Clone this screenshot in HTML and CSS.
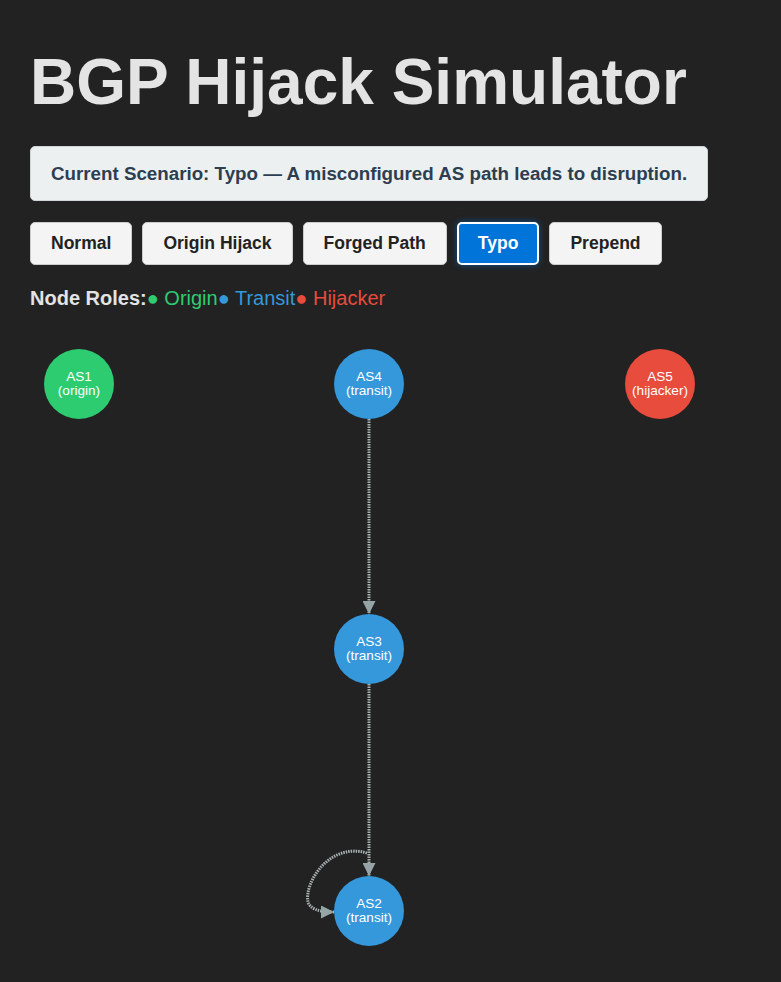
FILE: index.html
```html
<!DOCTYPE html>
<html lang="en">
<head>
<meta charset="utf-8">
<title>BGP Hijack Simulator</title>
<link rel="stylesheet" href="styles.css">
</head>
<body>
<main class="app">
  <h1 class="title">BGP Hijack Simulator</h1>
  <div class="scenario">Current Scenario: Typo — A misconfigured AS path leads to disruption.</div>
  <div class="controls">
    <button class="btn">Normal</button>
    <button class="btn">Origin Hijack</button>
    <button class="btn">Forged Path</button>
    <button class="btn active">Typo</button>
    <button class="btn">Prepend</button>
  </div>
  <div class="legend"><strong>Node Roles:</strong><span class="origin">● Origin</span><span class="transit">● Transit</span><span class="hijacker">● Hijacker</span></div>
  <svg class="graph" width="721" height="652" viewBox="0 0 721 652">
    <defs>
      <marker id="arrow" markerUnits="userSpaceOnUse" markerWidth="13" markerHeight="13" viewBox="0 0 12 12" refX="12" refY="6" orient="auto">
        <path d="M0,0 L12,6 L0,12 z" class="arrowhead"/>
      </marker>
    </defs>
    <path class="edge" d="M339 89 L339 284" marker-end="url(#arrow)"/>
    <path class="edge" d="M339 354 L339 546" marker-end="url(#arrow)"/>
    <path class="edge" d="M337 523 C 300 512, 274 552, 278 572 Q 281 582 304 582" marker-end="url(#arrow)"/>
    <g class="node">
      <circle cx="49" cy="54" r="35" class="c-origin"/>
      <text x="49" y="50.5">AS1</text><text x="49" y="64.5">(origin)</text>
    </g>
    <g class="node">
      <circle cx="339" cy="54" r="35" class="c-transit"/>
      <text x="339" y="50.5">AS4</text><text x="339" y="64.5">(transit)</text>
    </g>
    <g class="node">
      <circle cx="630" cy="54" r="35" class="c-hijacker"/>
      <text x="630" y="50.5">AS5</text><text x="630" y="64.5">(hijacker)</text>
    </g>
    <g class="node">
      <circle cx="339" cy="319" r="35" class="c-transit"/>
      <text x="339" y="315.5">AS3</text><text x="339" y="329.5">(transit)</text>
    </g>
    <g class="node">
      <circle cx="339" cy="581" r="35" class="c-transit"/>
      <text x="339" y="577.5">AS2</text><text x="339" y="591.5">(transit)</text>
    </g>
  </svg>
</main>
</body>
</html>
```

FILE: styles.css
```css
html, body {
  margin: 0;
  padding: 0;
  background: #222222;
}
body {
  font-family: "Liberation Sans", Arial, Helvetica, sans-serif;
  color: #e4e4e4;
}
.app {
  padding: 0 30px;
  display: flex;
  flex-direction: column;
  align-items: flex-start;
}
.title {
  font-size: 64px;
  font-weight: bold;
  line-height: normal;
  margin: 45px 0 0 0;
  color: #e4e4e4;
}
.scenario {
  margin-top: 27px;
  background: #ecf0f1;
  color: #2c3e50;
  border: 1px solid #cfd6d8;
  border-radius: 5px;
  padding: 16px 20px 15px;
  font-size: 18.75px;
  font-weight: bold;
  line-height: normal;
}
.controls {
  margin-top: 21px;
  display: flex;
  gap: 10px;
}
.btn {
  font-family: inherit;
  font-size: 17.55px;
  font-weight: bold;
  line-height: normal;
  padding: 10px 20px;
  background: #f4f4f4;
  color: #222;
  border: 1px solid #cccccc;
  border-radius: 5px;
}
.btn.active {
  background: #0074d9;
  color: #ffffff;
  border: 2px solid #ffffff;
  padding: 9px 19px;
  box-shadow: 0 0 6px rgba(0, 116, 217, 0.6);
}
.legend {
  margin-top: 22px;
  font-size: 20px;
  line-height: normal;
  color: #e4e4e4;
}
.legend .origin { color: #2ecc71; }
.legend .transit { color: #3498db; }
.legend .hijacker { color: #e74c3c; }
.graph {
  display: block;
  margin-top: 20px;
}
.edge {
  fill: none;
  stroke: #aab2b3;
  stroke-width: 3;
  stroke-dasharray: 1.5 1;
}
.arrowhead {
  fill: #95a5a6;
}
.node text {
  fill: #ffffff;
  font-family: "Liberation Sans", Arial, sans-serif;
  font-size: 13.6px;
  text-anchor: middle;
}
.c-origin { fill: #2ecc71; }
.c-transit { fill: #3498db; }
.c-hijacker { fill: #e74c3c; }
```
